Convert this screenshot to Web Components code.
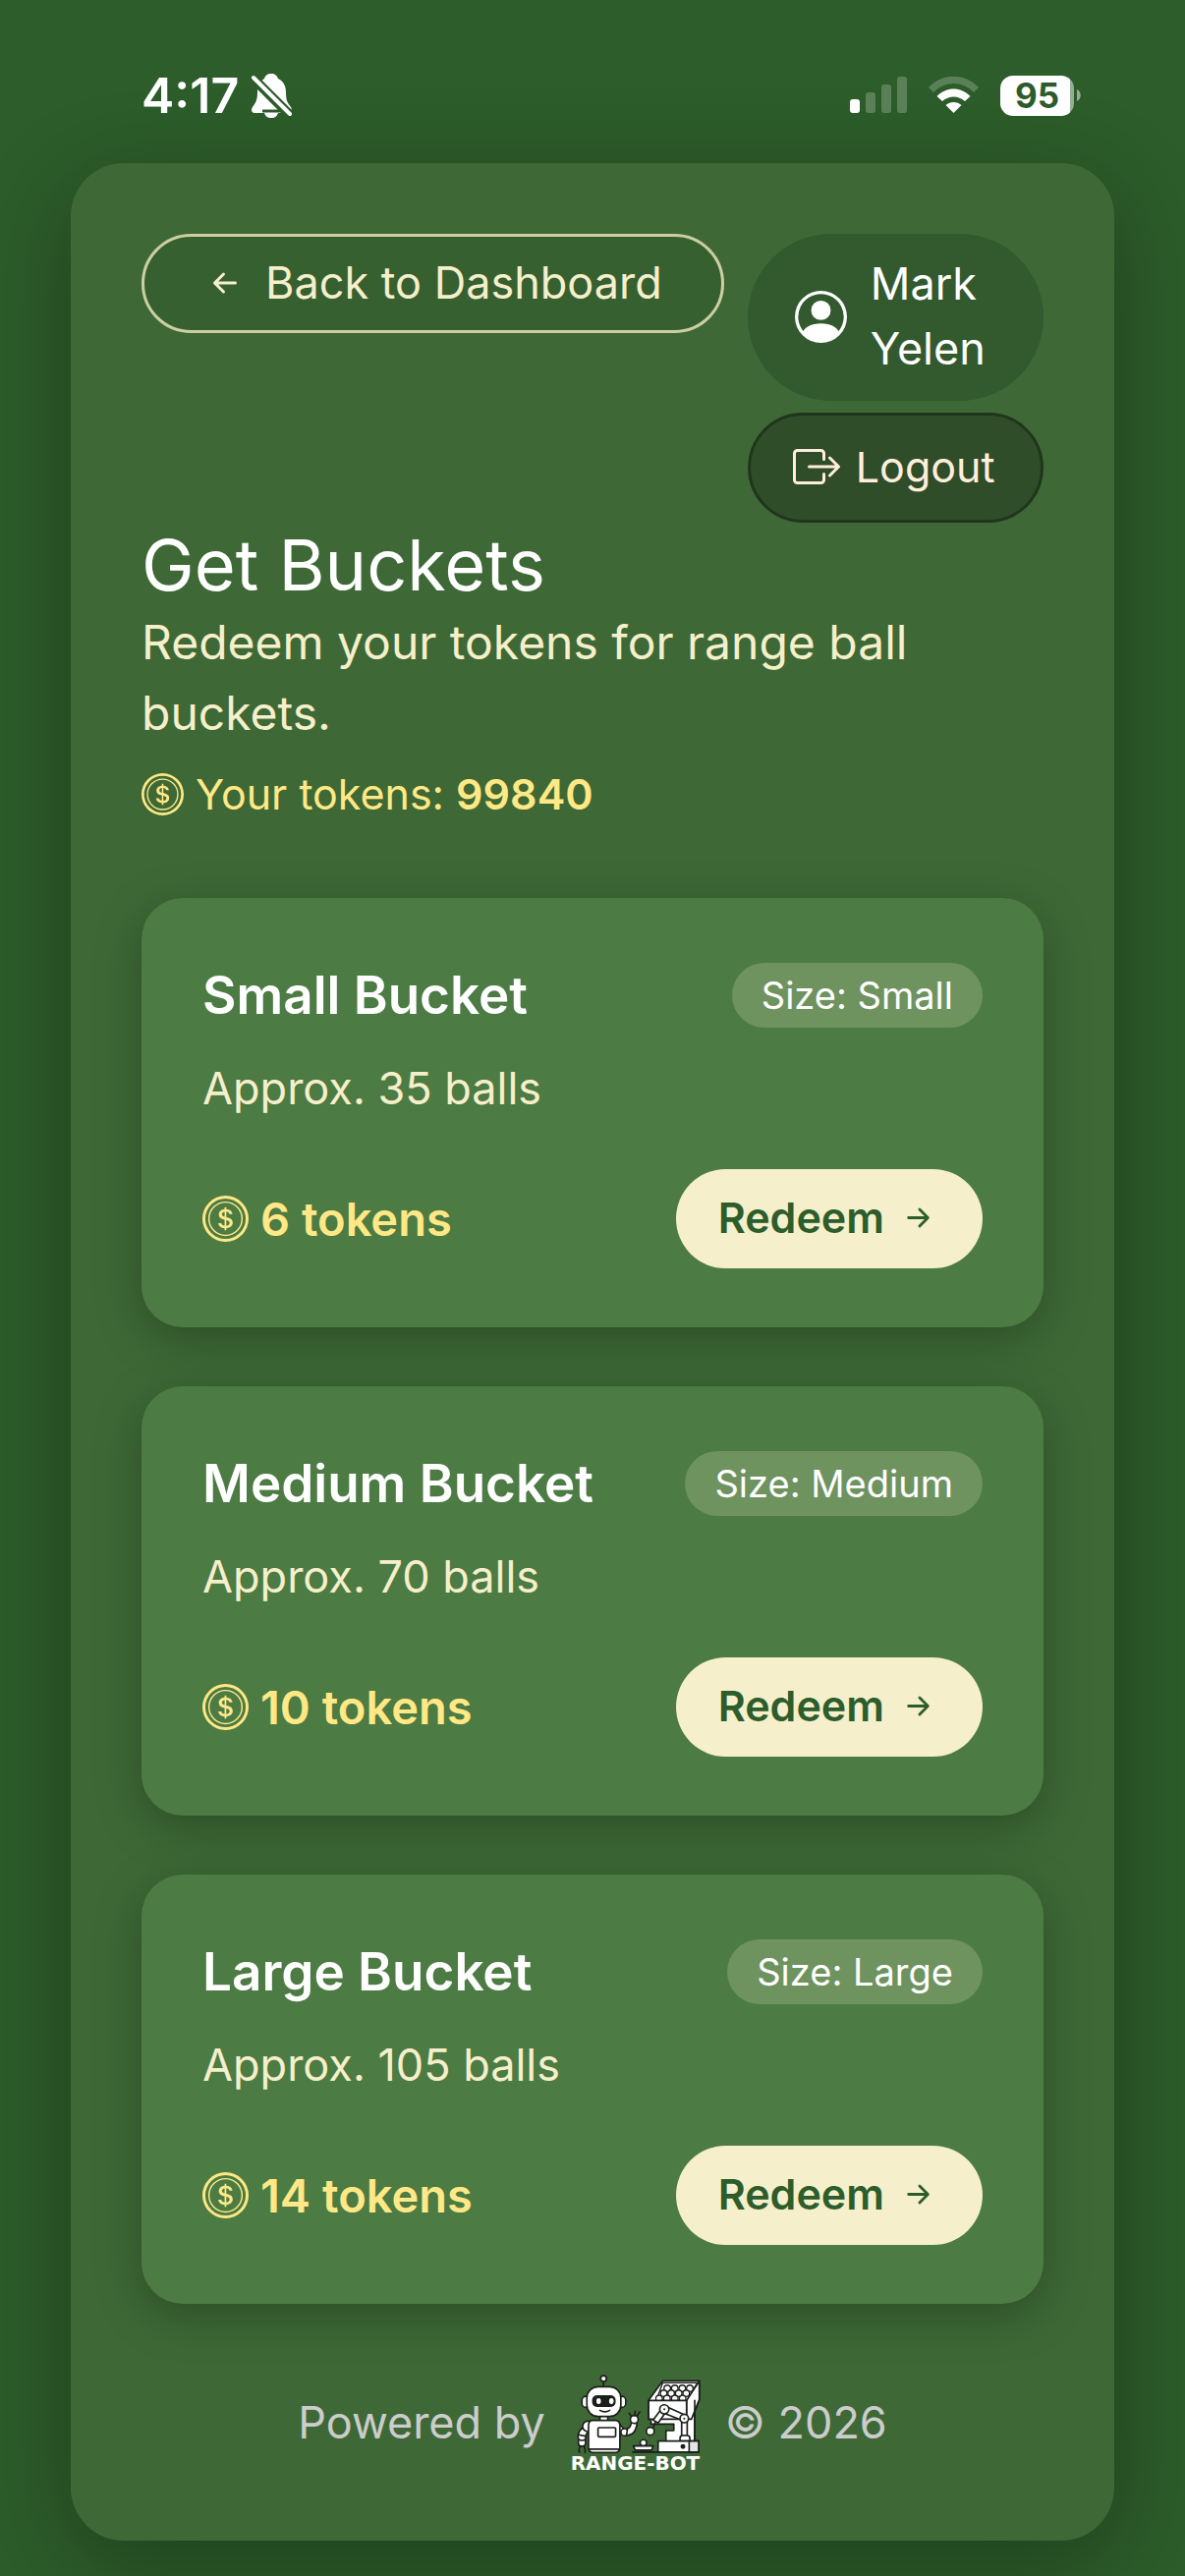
<!DOCTYPE html>
<html lang="en">
<head>
<meta charset="utf-8">
<meta name="viewport" content="width=device-width, initial-scale=1">
<title>Get Buckets</title>
<style>
	body {
		margin: 0;
		min-height: 100vh;
		background: #2d5d2b;
		color: #fff;
		font-family: Inter, "Liberation Sans", sans-serif;
		--cream: #f5efcb;
		--gold: #ffe885;
		--panel: #3e6936;
		--card: #4c7b44;
	}
</style>
</head>
<body>
<status-bar time="4:17" battery="95"></status-bar>
<app-panel>
	<page-header user="Mark Yelen"></page-header>
	<page-intro tokens="99840">
		<span slot="title">Get Buckets</span>
		Redeem your tokens for range ball buckets.
	</page-intro>
	<bucket-list>
		<bucket-card size="Small" balls="35" tokens="6"></bucket-card>
		<bucket-card size="Medium" balls="70" tokens="10"></bucket-card>
		<bucket-card size="Large" balls="105" tokens="14"></bucket-card>
	</bucket-list>
	<page-footer></page-footer>
</app-panel>

<script>
const icons = {
	'coin': '<path d="M5.5 9.511c.076.954.83 1.697 2.182 1.785V12h.6v-.709c1.4-.098 2.218-.846 2.218-1.932 0-.987-.626-1.496-1.745-1.76l-.473-.112V5.57c.6.068.982.396 1.074.85h1.052c-.076-.919-.864-1.638-2.126-1.716V4h-.6v.719c-1.195.117-2.01.836-2.01 1.853 0 .9.606 1.472 1.613 1.707l.397.098v2.034c-.615-.093-1.022-.43-1.114-.9zm2.177-2.166c-.59-.137-.91-.416-.91-.836 0-.47.345-.822.915-.925v1.76h-.005zm.692 1.193c.717.166 1.048.435 1.048.91 0 .542-.412.914-1.135.982V8.518z"/><path d="M8 15A7 7 0 1 1 8 1a7 7 0 0 1 0 14m0 1A8 8 0 1 0 8 0a8 8 0 0 0 0 16"/><path d="M8 13.5a5.5 5.5 0 1 1 0-11 5.5 5.5 0 0 1 0 11m0 .5A6 6 0 1 0 8 2a6 6 0 0 0 0 12"/>',
	'person': '<path d="M11 6a3 3 0 1 1-6 0 3 3 0 0 1 6 0"/><path fill-rule="evenodd" d="M0 8a8 8 0 1 1 16 0A8 8 0 0 1 0 8m8-7a7 7 0 0 0-5.468 11.37C3.242 11.226 4.805 10 8 10s4.757 1.225 5.468 2.37A7 7 0 0 0 8 1"/>',
	'logout': '<path fill-rule="evenodd" d="M10 12.5a.5.5 0 0 1-.5.5h-8a.5.5 0 0 1-.5-.5v-9a.5.5 0 0 1 .5-.5h8a.5.5 0 0 1 .5.5v2a.5.5 0 0 0 1 0v-2A1.5 1.5 0 0 0 9.5 2h-8A1.5 1.5 0 0 0 0 3.5v9A1.5 1.5 0 0 0 1.5 14h8a1.5 1.5 0 0 0 1.5-1.5v-2a.5.5 0 0 0-1 0z"/><path fill-rule="evenodd" d="M15.854 8.354a.5.5 0 0 0 0-.708l-3-3a.5.5 0 0 0-.708.708L14.293 7.5H5.5a.5.5 0 0 0 0 1h8.793l-2.147 2.146a.5.5 0 0 0 .708.708z"/>',
	'arrow-left': '<path fill-rule="evenodd" d="M12 8a.5.5 0 0 1-.5.5H5.707l2.147 2.146a.5.5 0 0 1-.708.708l-3-3a.5.5 0 0 1 0-.708l3-3a.5.5 0 1 1 .708.708L5.707 7.5H11.5a.5.5 0 0 1 .5.5"/>',
	'arrow-right': '<path fill-rule="evenodd" d="M4 8a.5.5 0 0 1 .5-.5h5.793L8.146 5.354a.5.5 0 1 1 .708-.708l3 3a.5.5 0 0 1 0 .708l-3 3a.5.5 0 0 1-.708-.708L10.293 8.5H4.5A.5.5 0 0 1 4 8"/>'
};

// <app-icon name="coin">, sized with --size
class AppIcon extends HTMLElement {
	constructor() {
		super();
		this.attachShadow({ mode: 'open' });
	}

	connectedCallback() {
		this.shadowRoot.innerHTML = `
<style>
	:host { display: block; flex: none; width: var(--size, 48px); height: var(--size, 48px); }
	svg { display: block; width: 100%; height: 100%; fill: currentColor; }
</style>
<svg viewBox="0 0 16 16" aria-hidden="true">${icons[this.getAttribute('name')]}</svg>`;
	}
}
window.customElements.define('app-icon', AppIcon);

class StatusBar extends HTMLElement {
	constructor() {
		super();
		this.attachShadow({ mode: 'open' });
	}

	connectedCallback() {
		this.shadowRoot.innerHTML = `
<style>
	:host { display: flex; justify-content: space-between; align-items: center; height: 70px; padding: 62px 106px 34px 144px; }
	div { display: flex; align-items: center; }
	svg { display: block; }
	.time { gap: 12px; font-size: 50px; font-weight: 600; line-height: 60px; }
	.system { gap: 22px; }
	.battery { gap: 3px; }
	.level { justify-content: center; width: 75px; height: 41px; border-radius: 13px; background: linear-gradient(90deg, #fff 71px, #96ad95 71px); color: #2d5b2b; font-size: 35px; font-weight: 700; }
</style>
<div class="time">
	<span>${this.getAttribute('time')}</span>
	<svg width="42" height="46" viewBox="0 0 42 46" fill="#fff">
		<path d="M21 1c4 0 6 2 7 5 6 3 8 8 8 14 0 9 2 11 5 15 2 4 0 6-3 6H5c-4 0-5-3-3-6 3-4 5-7 5-15 0-6 2-11 7-14 1-3 3-5 7-5z"/>
		<path d="M14 41h14c-1 3-3 5-7 5s-6-2-7-5z"/>
		<path d="M1 4L41 44" stroke="#2d5b2b" stroke-width="10"/>
		<path d="M3 5L40 42" stroke="#fff" stroke-width="4" stroke-linecap="round"/>
		<path d="M12 39h20" stroke="#2d5b2b" stroke-width="3"/>
	</svg>
</div>
<div class="system">
	<svg width="58" height="38" viewBox="0 0 58 38" fill="#5a8058">
		<rect y="23" width="10" height="14" rx="3" fill="#fff"/>
		<rect x="16" y="16" width="10" height="21" rx="3"/>
		<rect x="32" y="8" width="10" height="29" rx="3"/>
		<rect x="48" width="10" height="37" rx="3"/>
	</svg>
	<svg width="51" height="38" viewBox="0 0 51 38" fill="#fff">
		<path d="M0 11C14-4 37-4 51 11L46 16C34 4 17 4 5 16z" fill="#5a8058"/>
		<path d="M8.500 20C18 10 33 10 42.500 20L37 25C30 19 21 19 14 25z"/>
		<path d="M17.500 29C22 25 29 25 33.500 29L25.500 37z"/>
	</svg>
	<div class="battery">
		<div class="level">${this.getAttribute('battery')}</div>
		<svg width="4" height="12" viewBox="0 0 4 12"><path d="M0 0C5 2 5 10 0 12z" fill="#96ad95"/></svg>
	</div>
</div>`;
	}
}
window.customElements.define('status-bar', StatusBar);

class AppPanel extends HTMLElement {
	constructor() {
		super();
		this.attachShadow({ mode: 'open' });
		this.shadowRoot.innerHTML = `
<style>
	:host { display: block; margin: 0 72px 36px; padding: 72px; border-radius: 54px; background: var(--panel); box-shadow: 0 24px 96px rgba(0, 0, 0, .32); }
</style>
<slot></slot>`;
	}
}
window.customElements.define('app-panel', AppPanel);

class PageHeader extends HTMLElement {
	constructor() {
		super();
		this.attachShadow({ mode: 'open' });
	}

	connectedCallback() {
		this.shadowRoot.innerHTML = `
<style>
	:host { display: flex; align-items: flex-start; gap: 24px; }
	a, button, .user { display: flex; align-items: center; box-sizing: border-box; }
	a { flex: none; gap: 17px; padding: 13px 60px 15px 58px; border: 3px solid #cdcfa3; border-radius: 60px; background: #376031; color: var(--cream); font-size: 45px; line-height: 67px; text-decoration: none; }
	.account { flex: 1; min-width: 0; display: flex; flex-direction: column; gap: 12px; }
	.user { gap: 24px; padding: 18px 48px 20px; border-radius: 90px; background: #33592e; font-size: 45px; line-height: 66px; --size: 53px; }
	button { gap: 16px; padding: 19px 43px 21px; border: 3px solid #20361c; border-radius: 60px; background: #2f4d29; color: #ffeedb; font: inherit; font-size: 43px; line-height: 66px; }
</style>
<a href="#dashboard"><app-icon name="arrow-left"></app-icon>Back to Dashboard</a>
<div class="account">
	<div class="user"><app-icon name="person"></app-icon><span>${this.getAttribute('user')}</span></div>
	<button type="button"><app-icon name="logout"></app-icon>Logout</button>
</div>`;
		this.shadowRoot.querySelector('button').addEventListener('click', () => {
			this.dispatchEvent(new CustomEvent('logout'));
		});
	}
}
window.customElements.define('page-header', PageHeader);

class PageIntro extends HTMLElement {
	constructor() {
		super();
		this.attachShadow({ mode: 'open' });
	}

	connectedCallback() {
		this.shadowRoot.innerHTML = `
<style>
	:host { display: block; margin-bottom: 72px; }
	h1 { margin: 0; font-size: 72px; font-weight: 400; line-height: 86px; }
	p { margin: 0; color: var(--cream); font-size: 48px; line-height: 72px; }
	.tokens { display: flex; align-items: center; gap: 12px; margin-top: 12px; color: var(--gold); font-size: 43px; line-height: 68px; --size: 43px; }
	strong { font-weight: 600; }
</style>
<h1><slot name="title"></slot></h1>
<p><slot></slot></p>
<div class="tokens"><app-icon name="coin"></app-icon><span>Your tokens: <strong>${this.getAttribute('tokens')}</strong></span></div>`;
	}
}
window.customElements.define('page-intro', PageIntro);

class BucketList extends HTMLElement {
	constructor() {
		super();
		this.attachShadow({ mode: 'open' });
		this.shadowRoot.innerHTML = `
<style>
	:host { display: flex; flex-direction: column; gap: 60px; }
</style>
<slot></slot>`;
	}
}
window.customElements.define('bucket-list', BucketList);

class BucketCard extends HTMLElement {
	constructor() {
		super();
		this.attachShadow({ mode: 'open' });
	}

	connectedCallback() {
		const size = this.getAttribute('size');
		this.shadowRoot.innerHTML = `
<style>
	:host { display: block; padding: 60px 62px; border-radius: 42px; background: var(--card); box-shadow: 0 12px 48px rgba(0, 0, 0, .28); }
	.row { display: flex; align-items: center; justify-content: space-between; }
	h2 { margin: 0; font-size: 53px; font-weight: 600; line-height: 78px; }
	.size { padding: 4px 30px; border-radius: 33px; background: #6e935f; font-size: 38px; line-height: 58px; }
	p { margin: 22px 0 48px; color: var(--cream); font-size: 45px; line-height: 68px; }
	.price { display: flex; align-items: center; gap: 12px; color: var(--gold); font-size: 47px; font-weight: 600; --size: 47px; }
	button { display: flex; align-items: center; gap: 12px; padding: 16px 43px 18px; border: 0; border-radius: 54px; background: var(--cream); color: #2d5d2b; font: inherit; font-size: 43px; font-weight: 600; line-height: 67px; --size: 45px; }
</style>
<div class="row"><h2>${size} Bucket</h2><span class="size">Size: ${size}</span></div>
<p>Approx. ${this.getAttribute('balls')} balls</p>
<div class="row">
	<div class="price"><app-icon name="coin"></app-icon><span>${this.getAttribute('tokens')} tokens</span></div>
	<button type="button">Redeem<app-icon name="arrow-right"></app-icon></button>
</div>`;
		this.shadowRoot.querySelector('button').addEventListener('click', () => {
			this.dispatchEvent(new CustomEvent('redeem', { detail: size }));
		});
	}
}
window.customElements.define('bucket-card', BucketCard);

// Robot next to its ball dispenser
class RangeBotLogo extends HTMLElement {
	constructor() {
		super();
		this.attachShadow({ mode: 'open' });
		this.shadowRoot.innerHTML = `
<style>
	:host { display: block; width: 147px; height: 97px; }
	svg { display: block; width: 100%; height: 100%; overflow: visible; }
	text { font: bold 60px "DejaVu Sans", sans-serif; }
</style>
<svg viewBox="98 85 442 291" fill="#fff" stroke="#1b1f1b" stroke-width="5" stroke-linejoin="round" stroke-linecap="round">
	<path d="M222 106v16"/>
	<circle cx="222" cy="97" r="9"/>
	<rect x="156" y="151" width="26" height="34" rx="12"/>
	<rect x="264" y="151" width="26" height="34" rx="12"/>
	<rect x="211" y="208" width="24" height="20"/>
	<rect x="171" y="122" width="104" height="91" rx="34"/>
	<rect x="187" y="148" width="72" height="36" rx="15" fill="#1b1f1b" stroke="none"/>
	<ellipse cx="207" cy="166" rx="7" ry="9" stroke="none"/>
	<ellipse cx="246" cy="166" rx="7" ry="9" stroke="none"/>
	<path d="M211 194q15 9 30 0" fill="none"/>
	<path d="M156 300q-12 8-8 22M160 303q8 8 5 20" fill="none"/>
	<rect x="145" y="280" width="22" height="24" rx="9"/>
	<rect x="144" y="262" width="24" height="24" rx="10"/>
	<path d="M160 247q-14 8-15 22l22 4q2-10 10-15z"/>
	<circle cx="174" cy="243" r="16"/>
	<path d="M270 235l16 18-12 16-8-5z"/>
	<circle cx="286" cy="261" r="11"/>
	<path d="M296 248q6 1 8-6l4-12 17 5-5 17q-7 18-28 19z"/>
	<path d="M311 217l-11-14M317 211l2-14M323 214l10-15" fill="none"/>
	<circle cx="316" cy="222" r="12"/>
	<path d="M188 225h70q14 0 14 16v67q0 15-14 15h-68q-14 0-14-15v-66q0-17 12-17z"/>
	<path d="M178 313h93"/>
	<rect x="205" y="247" width="54" height="28" rx="3"/>
	<path d="M403 104h112v57l-14 37v92h-88v-34h24v-20h-70v-16h-7v-57z"/>
	<path d="M476 164l39-60v57l-24 60h-15z"/>
	<g stroke-width="4">
		<path d="M403 110h106l-33 54h-93z"/>
		<circle cx="417" cy="127" r="10"/><circle cx="440" cy="127" r="10"/><circle cx="463" cy="127" r="10"/><circle cx="486" cy="127" r="10"/>
		<circle cx="406" cy="142" r="10"/><circle cx="429" cy="142" r="10"/><circle cx="452" cy="142" r="10"/><circle cx="475" cy="142" r="10"/>
		<circle cx="392" cy="158" r="10"/><circle cx="416" cy="158" r="10"/><circle cx="440" cy="158" r="10"/><circle cx="464" cy="158" r="10"/>
	</g>
	<path d="M360 164h116v57H360z"/>
	<path d="M501 164v122"/>
	<path d="M404 178l71 32-7 17-71-28z"/>
	<path d="M397 192l14 10-22 31-15-9z"/>
	<circle cx="408" cy="191" r="14"/>
	<circle cx="408" cy="191" r="3" fill="#1b1f1b" stroke="none"/>
	<path d="M461 222h17v50h-17z"/>
	<circle cx="469" cy="219" r="13"/>
	<circle cx="469" cy="219" r="3" fill="#1b1f1b" stroke="none"/>
	<path d="M381 229l-7 21" fill="none"/>
	<circle cx="365" cy="258" r="12"/>
	<path d="M456 288v-9q0-8 8-8h14q8 0 8 8v9z"/>
	<rect x="389" y="288" width="124" height="34"/>
	<path d="M484 288h29v34h-29z" fill="#e4e4e4"/>
	<circle cx="465" cy="305" r="5" fill="#1b1f1b"/>
	<circle cx="344" cy="294" r="10"/>
	<path d="M313 303h61l-5 13h-50z"/>
	<path d="M311 322h80" fill="none"/>
	<text x="319" y="376" text-anchor="middle" stroke="none">RANGE-BOT</text>
</svg>`;
	}
}
window.customElements.define('range-bot-logo', RangeBotLogo);

class PageFooter extends HTMLElement {
	constructor() {
		super();
		this.attachShadow({ mode: 'open' });
		this.shadowRoot.innerHTML = `
<style>
	:host { display: flex; align-items: center; justify-content: center; gap: 18px; margin-top: 72px; color: #ccc; font-size: 45px; }
</style>
<span>Powered by</span>
<range-bot-logo></range-bot-logo>
<span>© 2026</span>`;
	}
}
window.customElements.define('page-footer', PageFooter);
</script>
</body>
</html>
